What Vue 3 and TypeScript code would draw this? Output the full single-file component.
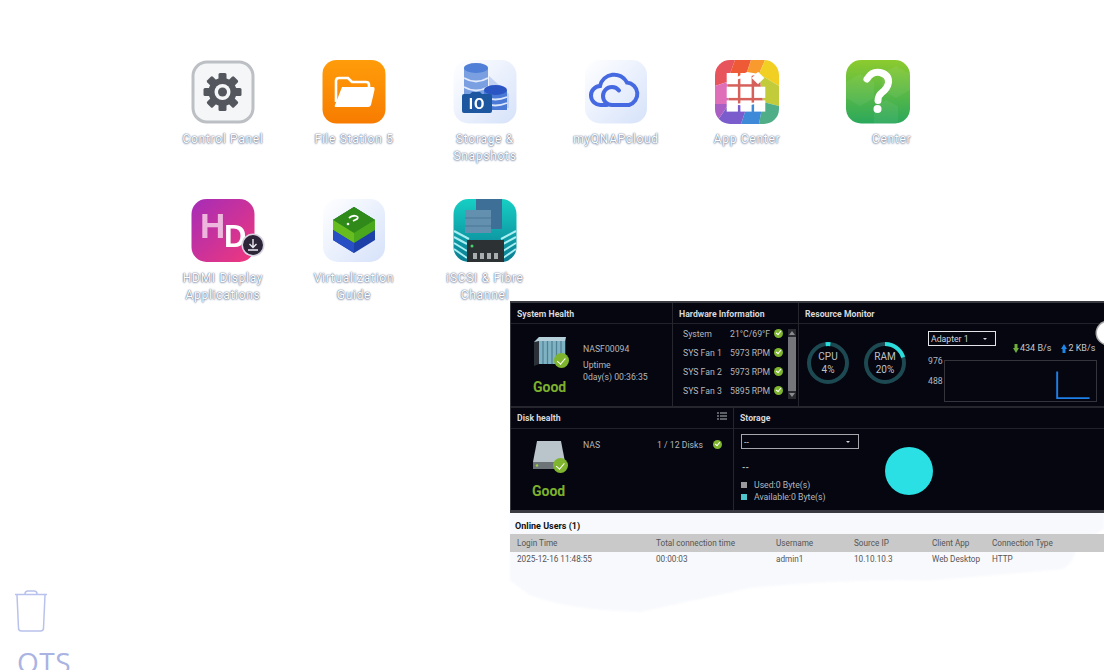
<script setup lang="ts">
interface AppItem {
  id: string
  label: string
  ghost?: string
}

const apps: AppItem[] = [
  { id: 'control', label: 'Control Panel' },
  { id: 'files', label: 'File Station 5' },
  { id: 'storage', label: 'Storage & Snapshots' },
  { id: 'cloud', label: 'myQNAPcloud' },
  { id: 'appcenter', label: 'App Center' },
  { id: 'help', label: 'Center', ghost: 'Help' },
  { id: 'hd', label: 'HDMI Display Applications' },
  { id: 'virt', label: 'Virtualization Guide' },
  { id: 'iscsi', label: 'iSCSI & Fibre Channel' },
]

const sensors = [
  { name: 'System', value: '21°C/69°F' },
  { name: 'SYS Fan 1', value: '5973 RPM' },
  { name: 'SYS Fan 2', value: '5973 RPM' },
  { name: 'SYS Fan 3', value: '5895 RPM' },
]

const users = [
  { login: '2025-12-16 11:48:55', total: '00:00:03', user: 'admin1', ip: '10.10.10.3', app: 'Web Desktop', type: 'HTTP' },
]

const tiles = [
  [0, 0], [1, 0], [0, 1], [1, 1], [2, 1], [0, 2], [1, 2], [2, 2],
]

// stroke-dasharray for a gauge ring of radius 19
const ring = (pct: number) => {
  const c = 2 * Math.PI * 19
  return `${(c * pct) / 100} ${c}`
}
</script>

<template>
  <div class="desktop">
    <div class="icons">
      <div v-for="app in apps" :key="app.id" class="app">
        <svg class="app-icon" viewBox="0 0 64 64" width="64" height="64">
          <defs>
            <linearGradient id="g-orange" x1="0" y1="0" x2="0" y2="1">
              <stop offset="0" stop-color="#ff9c0a" />
              <stop offset="1" stop-color="#f77c00" />
            </linearGradient>
            <linearGradient id="g-pale" x1="0" y1="0" x2="1" y2="1">
              <stop offset="0" stop-color="#ffffff" />
              <stop offset="1" stop-color="#d6e2fa" />
            </linearGradient>
            <linearGradient id="g-green" x1="0" y1="0" x2="0" y2="1">
              <stop offset="0" stop-color="#8ccb2e" />
              <stop offset="1" stop-color="#2aa85c" />
            </linearGradient>
            <linearGradient id="g-hd" x1="0" y1="0" x2="1" y2="1">
              <stop offset="0" stop-color="#a52cb8" />
              <stop offset="1" stop-color="#f0387c" />
            </linearGradient>
            <linearGradient id="g-teal" x1="0" y1="0" x2="0" y2="1">
              <stop offset="0" stop-color="#16cfc4" />
              <stop offset="1" stop-color="#0a7c92" />
            </linearGradient>
          </defs>

          <template v-if="app.id === 'control'">
            <rect x="2" y="2" width="60" height="60" rx="14" fill="#f5f6f8" stroke="#bcbfc3" stroke-width="3" />
            <g transform="translate(31.500 32)" fill="#54585e">
              <rect v-for="a in [0, 45, 90, 135, 180, 225, 270, 315]" :key="a" x="-4" y="-19" width="8" height="9" rx="1.500" :transform="`rotate(${a})`" />
              <circle r="14" />
              <circle r="8" fill="#f5f6f8" />
              <circle r="4.500" />
            </g>
          </template>

          <template v-else-if="app.id === 'files'">
            <rect x="0.500" y="0" width="63" height="63.500" rx="14" fill="url(#g-orange)" />
            <path d="M14 42V21q0-3 3-3h9l4 4h14q3 0 3 3v2" fill="none" stroke="#fff" stroke-width="2.600" />
            <path d="M20 27h31q2 0 1.600 2.400L49 45q-.6 2-3 2H14q-2 0-1-2z" fill="#fff" />
          </template>

          <template v-else-if="app.id === 'storage'">
            <rect x="0.500" y="0" width="63" height="63.500" rx="15" fill="url(#g-pale)" />
            <path d="M36 16l20 18v14H36z" fill="#c3d2f2" />
            <rect x="11" y="8" width="24" height="34" fill="#7aa0e2" />
            <ellipse cx="23" cy="8" rx="12" ry="5" fill="#4f7fd6" />
            <path d="M11 18q12 7 24 0M11 27q12 7 24 0" fill="none" stroke="#e0e9fa" stroke-width="2" />
            <rect x="31" y="30" width="23" height="20" fill="#4a7ad6" />
            <ellipse cx="42.500" cy="30" rx="11.500" ry="5" fill="#2c55c4" />
            <path d="M31 37q11 5 23 0M31 43q11 5 23 0" fill="none" stroke="#dbe6fb" stroke-width="1.800" />
            <path d="M9 36q0-2 2-2h6l2-2h8l2 2h8q2 0 2 2v15q0 2-2 2H11q-2 0-2-2z" fill="#1c57a0" />
            <text x="24" y="49" text-anchor="middle" class="io">IO</text>
          </template>

          <template v-else-if="app.id === 'cloud'">
            <rect x="1" y="0" width="62" height="63.500" rx="15" fill="url(#g-pale)" />
            <path d="M23 45h-6a9.500 9.500 0 0 1-1-19 14.500 14.500 0 0 1 27-3.500 11.500 11.500 0 0 1 2 22.500H28a9 9 0 0 1 0-18c3 0 5.500 1.500 7 3.500" fill="none" stroke="#4469e0" stroke-width="4" stroke-linecap="round" />
          </template>

          <template v-else-if="app.id === 'appcenter'">
            <clipPath id="clip-app"><rect x="0" y="0" width="64" height="64" rx="15" /></clipPath>
            <g clip-path="url(#clip-app)">
              <polygon points="0,0 20,0 12,22 0,26" fill="#e8545c" />
              <polygon points="20,0 36,0 32,12 12,22" fill="#ee5a36" />
              <polygon points="36,0 50,0 44,14 32,12" fill="#f89a2e" />
              <polygon points="50,0 64,0 64,26 44,14" fill="#f2cf23" />
              <polygon points="64,26 64,46 48,42 44,14" fill="#c2cc3a" />
              <polygon points="64,46 64,64 44,64 48,42" fill="#4fae88" />
              <polygon points="44,64 26,64 32,46 48,42" fill="#3e8ad8" />
              <polygon points="26,64 0,64 14,44 32,46" fill="#7a5ccc" />
              <polygon points="0,64 0,44 14,44" fill="#a85ec2" />
              <polygon points="0,26 12,22 14,44 0,44" fill="#de6fb8" />
              <polygon points="12,22 44,14 48,42 14,44" fill="#d6605a" />
            </g>
            <rect v-for="t in tiles" :key="t.join()" :x="11.700 + t[0] * 13.700" :y="13 + t[1] * 13.700" width="11.200" height="11.200" fill="#fff" />
            <rect x="38.500" y="13.500" width="9" height="9" fill="#fff" transform="rotate(45 43 18)" />
          </template>

          <template v-else-if="app.id === 'help'">
            <rect x="0" y="0" width="64" height="63.500" rx="15" fill="url(#g-green)" />
            <path d="M0 22l14-8 14 8v16l-14 8-14-8zM36 14l14-8 14 8v16l-14 8-14-8zM28 46l12-6 12 6v18H28z" fill="#fff" opacity="0.060" />
            <path d="M21 19q5-8 13-6.500 9 2 8.500 10-1 6-6.500 10-4 3-4 8" fill="none" stroke="#fff" stroke-width="7" stroke-linecap="round" />
            <circle cx="31.500" cy="49" r="4" fill="#fff" />
          </template>

          <template v-else-if="app.id === 'hd'">
            <rect x="0.500" y="0" width="63" height="63" rx="15" fill="url(#g-hd)" />
            <text x="9" y="39" class="hd hd-h">H</text>
            <text x="33" y="48" class="hd">D</text>
          </template>

          <template v-else-if="app.id === 'virt'">
            <rect x="1" y="0" width="62" height="63" rx="15" fill="url(#g-pale)" />
            <polygon points="32,8 53,21 53,41 32,54 11,41 11,21" fill="#1c3fa8" />
            <polygon points="11,28 32,41 53,28 53,21 32,8 11,21" fill="#3a9a1e" />
            <polygon points="11,21 32,34 53,21 32,8" fill="#2f8a1a" />
            <polygon points="11,21 32,34 32,44 11,31" fill="#67bd1e" />
            <polygon points="32,34 53,21 53,31 32,44" fill="#4aa81c" />
            <polygon points="11,31 32,44 32,54 11,41" fill="#2850c4" />
            <path d="M27 19q3-3 7-2 3 1 1 3l-4 2" fill="none" stroke="#fff" stroke-width="1.800" />
            <circle cx="26" cy="25" r="1.300" fill="#fff" />
          </template>

          <template v-else>
            <rect x="0.500" y="0" width="63" height="63" rx="15" fill="url(#g-teal)" />
            <rect x="23" y="0" width="26" height="30" fill="#3d6f97" />
            <rect x="12" y="11" width="26" height="23" fill="#6390ae" />
            <path d="M12 19h26M12 27h26" stroke="#4a7797" />
            <path d="M1 32l15 8M1 38l13 7M1 44l13 8M1 50l13 9M63 32l-15 8M63 38l-13 7M63 44l-13 8M63 50l-13 9" stroke="#a9eef2" stroke-width="2" />
            <rect x="14" y="41" width="37" height="22" fill="#2c3134" />
            <rect x="20" y="54" width="4" height="6" fill="#a8adb0" />
            <rect x="27" y="54" width="4" height="6" fill="#a8adb0" />
            <rect x="34" y="54" width="4" height="6" fill="#a8adb0" />
            <rect x="41" y="54" width="4" height="6" fill="#a8adb0" />
            <circle cx="19" cy="47" r="1.500" fill="#46d46a" />
          </template>
        </svg>

        <span v-if="app.id === 'hd'" class="badge">
          <svg viewBox="0 0 20 20" width="20" height="20">
            <path d="M10 4v8M6.500 9l3.500 3.500L13.500 9M5 15h10" fill="none" stroke="#e8e8ee" stroke-width="1.400" />
          </svg>
        </span>
        <span class="app-label"><span v-if="app.ghost" class="ghost">{{ app.ghost }} </span>{{ app.label }}</span>
      </div>
    </div>

    <div class="trash">
      <svg viewBox="0 0 34 44" width="34" height="44">
        <path d="M11 5q0-3 3-3h6q3 0 3 3M1 5.500h32M3 6l1.500 33q0 3 3 3h19q3 0 3-3L31 6" fill="none" stroke="#b9c2ec" stroke-width="1.500" />
      </svg>
      <span class="qts">QTS</span>
    </div>

    <svg class="smear" viewBox="0 0 594 110" width="594" height="102" preserveAspectRatio="none">
      <path d="M0 0H594V20L566 40Q564 58 552 64L420 76Q330 74 240 84L130 110Q60 108 20 92L0 76Z" fill="#f8f9fd" />
    </svg>

    <section class="monitor">
      <div class="dash">
        <div class="row-top">
          <div class="cell">
            <h3>System Health</h3>
            <div class="cell-body health">
              <div class="status">
                <div class="device">
                  <svg viewBox="0 0 36 32" width="36" height="32">
                    <polygon points="1,6 6,1 33,1 33,28 6,28 1,30" fill="#2b3138" />
                    <rect x="6" y="5" width="26" height="23" fill="#7fb2c2" />
                    <path d="M10 5v23M14.500 5v23M19 5v23M23.500 5v23M28 5v23" stroke="#4e7f92" stroke-width="1.200" />
                    <polygon points="1,6 6,1 33,1 32,5 6,5" fill="#b5d0da" />
                  </svg>
                  <i class="check big" />
                </div>
                <strong>Good</strong>
              </div>
              <div class="host">
                <span class="host-name">NASF00094</span>
                <span>Uptime</span>
                <span>0day(s) 00:36:35</span>
              </div>
            </div>
          </div>

          <div class="cell">
            <h3>Hardware Information</h3>
            <div class="cell-body hardware">
              <ul class="sensors">
                <li v-for="s in sensors" :key="s.name">
                  <span class="sensor-name">{{ s.name }}</span>
                  <span class="sensor-value">{{ s.value }}</span>
                  <i class="check" />
                </li>
              </ul>
              <div class="scrollbar">
                <span class="arrow up" />
                <span class="thumb" />
                <span class="arrow down" />
              </div>
            </div>
          </div>

          <div class="cell">
            <h3>Resource Monitor</h3>
            <div class="cell-body resource">
              <div class="gauge" v-for="g in [{ n: 'CPU', p: 4, o: -7 }, { n: 'RAM', p: 20, o: 0 }]" :key="g.n">
                <svg viewBox="0 0 46 46" width="46" height="46">
                  <circle cx="23" cy="23" r="19" fill="none" stroke="#1d4a52" stroke-width="4" />
                  <circle cx="23" cy="23" r="19" fill="none" stroke="#2bdcdc" stroke-width="4" :stroke-dasharray="ring(g.p)" :transform="`rotate(${-90 + g.o} 23 23)`" />
                </svg>
                <span class="gauge-text">{{ g.n }}<br />{{ g.p }}%</span>
              </div>
              <div class="network">
                <div class="net-top">
                  <div class="select adapter">Adapter 1<span class="caret" /></div>
                  <div class="speeds">
                    <svg viewBox="0 0 6 9" width="6" height="9"><path d="M1.500 0h3v4H6L3 9 0 4h1.500z" fill="#6fae3a" /></svg>434 B/s
                    <svg class="up-arrow" viewBox="0 0 6 9" width="6" height="9"><path d="M1.500 9h3V5H6L3 0 0 5h1.500z" fill="#1f86e8" /></svg>2 KB/s
                  </div>
                </div>
                <div class="chart">
                  <div class="axis"><span>976</span><span>488</span></div>
                  <svg class="plot" viewBox="0 0 153 42" width="153" height="42">
                    <path d="M115 11V39H149" fill="none" stroke="#1f7fe8" stroke-width="2" />
                  </svg>
                </div>
              </div>
            </div>
          </div>
        </div>

        <div class="row-bottom">
          <div class="cell">
            <h3 class="with-tool">
              Disk health
              <svg viewBox="0 0 10 8" width="10" height="8">
                <path d="M3 1h7M3 4h7M3 7h7M0 1h2M0 4h2M0 7h2" stroke="#b8bac0" />
              </svg>
            </h3>
            <div class="cell-body disk">
              <div class="status">
                <div class="device">
                  <svg viewBox="0 0 36 30" width="36" height="30">
                    <polygon points="5,0 29,0 33,21 1,21" fill="#b9c5cb" />
                    <rect x="1" y="21" width="32" height="7" fill="#6d7478" />
                    <circle cx="5" cy="24.500" r="1.200" fill="#9ed04a" />
                  </svg>
                  <i class="check big" />
                </div>
                <strong>Good</strong>
              </div>
              <div class="disk-row">
                <span class="disk-name">NAS</span>
                <span class="disk-count">1 / 12 Disks</span>
                <i class="check" />
              </div>
            </div>
          </div>

          <div class="cell">
            <h3>Storage</h3>
            <div class="cell-body storage">
              <div class="volume">
                <div class="select pool">--<span class="caret" /></div>
                <div class="dashes">--</div>
                <div class="legend"><i class="used" />Used:0 Byte(s)</div>
                <div class="legend"><i class="avail" />Available:0 Byte(s)</div>
              </div>
              <div class="pie" />
            </div>
          </div>
        </div>
      </div>

      <div class="online">
        <h4>Online Users ({{ users.length }})</h4>
        <div class="tr th">
          <span>Login Time</span>
          <span>Total connection time</span>
          <span>Username</span>
          <span>Source IP</span>
          <span>Client App</span>
          <span>Connection Type</span>
        </div>
        <div v-for="u in users" :key="u.login" class="tr">
          <span>{{ u.login }}</span>
          <span>{{ u.total }}</span>
          <span>{{ u.user }}</span>
          <span>{{ u.ip }}</span>
          <span>{{ u.app }}</span>
          <span>{{ u.type }}</span>
        </div>
      </div>

      <span class="close" />
    </section>
  </div>
</template>

<style>
html,
body {
  margin: 0;
  background: #fff;
  overflow: hidden;
}
</style>

<style scoped>
.desktop {
  position: relative;
  width: 1104px;
  height: 670px;
  overflow: hidden;
  background: #fff;
  font-family: Roboto, "Liberation Sans", sans-serif;
}

.icons {
  position: absolute;
  left: 157.500px;
  top: 60px;
  display: grid;
  grid-template-columns: repeat(6, 131px);
  grid-auto-rows: 139px;
}

.app {
  position: relative;
  display: flex;
  flex-direction: column;
  align-items: center;
}

.app-icon {
  display: block;
  filter: blur(0.4px);
}

.app-label {
  width: 104px;
  margin-top: 7px;
  text-align: center;
  font-size: 12px;
  line-height: 17px;
  letter-spacing: 0.7px;
  color: #fff;
  text-shadow: 0 0 1px #5d6b86, 0 0 2px #7c8aa8, 0 1px 2px #aab4c8;
}

.ghost {
  visibility: hidden;
}

.io {
  font: 700 15px Roboto, sans-serif;
  fill: #fff;
  letter-spacing: 1px;
}

.hd {
  font: 700 31px "Liberation Sans", sans-serif;
  fill: #fff;
}

.hd-h {
  font-size: 35px;
  fill: #edb6dd;
}

.badge {
  position: absolute;
  left: 85px;
  top: 36px;
  width: 20px;
  height: 20px;
  border-radius: 50%;
  background: #2c2538;
  box-shadow: 0 0 0 1.500px #d8d4e2;
  display: flex;
}

.trash {
  position: absolute;
  left: 14px;
  top: 589px;
}

.trash svg {
  display: block;
}

.qts {
  display: block;
  margin: 15px 0 0 3px;
  font-family: "Open Sans", sans-serif;
  font-size: 28px;
  font-weight: 500;
  line-height: 28px;
  letter-spacing: 0.5px;
  color: #aab3e2;
}

.smear {
  position: absolute;
  left: 510px;
  top: 510px;
  filter: blur(1px);
}

.monitor {
  position: absolute;
  left: 510px;
  top: 301px;
  width: 594px;
}

.dash {
  background: #05060f;
  border: 1px solid #3a3b42;
  border-right: 0;
  border-top-width: 2px;
  border-bottom-width: 3px;
  color: #b4b7bd;
  font-size: 8.700px;
}

.row-top,
.row-bottom {
  display: grid;
  height: 103px;
}

.row-top {
  grid-template-columns: 161px 126px 1fr;
  border-bottom: 2px solid #26272e;
}

.row-bottom {
  grid-template-columns: 222px 1fr;
  height: 102px;
}

.cell {
  display: flex;
  flex-direction: column;
  min-width: 0;
}

.cell + .cell {
  border-left: 1px solid #26272e;
}

h3 {
  box-sizing: border-box;
  margin: 0;
  height: 21px;
  flex: none;
  padding: 1px 6px 0;
  display: flex;
  align-items: center;
  font-size: 8.700px;
  font-weight: 700;
  color: #d6d8dc;
  border-bottom: 1px solid #22232a;
}

.row-bottom h3 {
  padding-top: 0;
}

.with-tool {
  justify-content: space-between;
  padding-right: 6px;
}

.with-tool svg {
  margin-top: -5px;
}

.cell-body {
  flex: 1;
  display: flex;
  min-height: 0;
}

.health {
  padding: 12px 0 0 22px;
}

.status {
  width: 40px;
  display: flex;
  flex-direction: column;
  align-items: flex-start;
}

.device {
  position: relative;
  height: 38px;
}

.device svg {
  display: block;
}

strong {
  display: block;
  margin-top: 5px;
  font-size: 14px;
  font-weight: 700;
  line-height: 16px;
  color: #7cb02d;
}

.check {
  display: inline-block;
  position: relative;
  width: 9px;
  height: 9px;
  border-radius: 50%;
  background: #7fb52e;
  flex: none;
}

.check::after {
  content: "";
  position: absolute;
  left: 2.800px;
  top: 1.300px;
  width: 2.200px;
  height: 4px;
  border: solid #fff;
  border-width: 0 1.100px 1.100px 0;
  transform: rotate(40deg);
}

.check.big {
  position: absolute;
  left: 21px;
  top: 17px;
  width: 15px;
  height: 15px;
}

.check.big::after {
  left: 5px;
  top: 2.500px;
  width: 3.500px;
  height: 6.500px;
  border-width: 0 1.600px 1.600px 0;
}

.host {
  display: flex;
  flex-direction: column;
  margin-left: 10px;
  padding-top: 7px;
  line-height: 12px;
}

.host-name {
  margin-bottom: 4px;
}

.hardware {
  padding: 0 2px 0 10px;
  justify-content: space-between;
}

.sensors {
  list-style: none;
  margin: 0;
  padding: 0;
  width: 100px;
}

.sensors li {
  display: flex;
  align-items: center;
  height: 19px;
}

.sensor-name {
  width: 47px;
}

.sensor-value {
  width: 44px;
}

.scrollbar {
  width: 8px;
  height: 70px;
  margin-top: 5px;
  background: #2a2b30;
  display: flex;
  flex-direction: column;
  align-items: center;
}

.arrow {
  width: 0;
  height: 0;
  margin: 2px 0;
  border: 3px solid transparent;
}

.arrow.up {
  border-top: 0;
  border-bottom: 4px solid #8a8b90;
}

.arrow.down {
  border-bottom: 0;
  border-top: 4px solid #8a8b90;
}

.thumb {
  flex: 1;
  width: 8px;
  background: #74757a;
}

.resource {
  padding: 16px 0 0 6px;
  gap: 11px;
}

.gauge {
  position: relative;
  width: 46px;
  height: 46px;
  flex: none;
}

.gauge svg {
  display: block;
}

.gauge-text {
  position: absolute;
  inset: 0;
  display: flex;
  align-items: center;
  justify-content: center;
  text-align: center;
  font-size: 10px;
  line-height: 13px;
  color: #bfc1c6;
}

.network {
  margin: -9px 0 0 9px;
  width: 170px;
  flex: none;
}

.net-top {
  display: flex;
  height: 29px;
}

.select {
  display: flex;
  align-items: center;
  justify-content: space-between;
  box-sizing: border-box;
  height: 15px;
  padding: 0 8px 0 2px;
  border: 1px solid #e4e5e8;
  color: #d2d4d8;
}

.adapter {
  width: 68px;
}

.caret {
  width: 0;
  height: 0;
  border: 2px solid transparent;
  border-top: 2.500px solid #d2d4d8;
  border-bottom: 0;
}

.speeds {
  margin: 11px 0 0 17px;
  display: flex;
  align-items: center;
  height: 12px;
  white-space: nowrap;
  font-size: 9px;
  color: #c6c8cc;
}

.speeds svg {
  margin-right: 1px;
}

.up-arrow {
  margin-left: 10px;
}

.chart {
  display: flex;
  gap: 2px;
}

.axis {
  width: 14px;
  display: flex;
  flex-direction: column;
  gap: 9px;
  line-height: 11px;
  margin-top: -4px;
}

.plot {
  display: block;
  flex: none;
  box-sizing: border-box;
  border: 1px solid #34353c;
}

.disk {
  padding: 12px 0 0 21px;
}

.disk .status {
  width: 41px;
}

.disk .status strong {
  margin-top: 4px;
}

.disk-row {
  display: flex;
  align-items: center;
  height: 9px;
  margin: -1px 0 0 10px;
}

.disk-name {
  width: 74px;
}

.disk-count {
  width: 56px;
}

.storage {
  padding: 5px 0 0 7px;
}

.volume {
  width: 118px;
}

.pool {
  height: 15px;
  border-color: #a5a7ac;
}

.dashes {
  margin: 13px 0 7px 1px;
  line-height: 10px;
  font-weight: 700;
}

.legend {
  display: flex;
  align-items: center;
  height: 12px;
}

.legend i {
  width: 6px;
  height: 6px;
  margin-right: 7px;
}

.used {
  background: #9a9a9e;
}

.avail {
  background: #4fc4cc;
}

.pie {
  width: 48px;
  height: 48px;
  margin: 13px 0 0 26px;
  border-radius: 50%;
  background: #2ae0e4;
}

.online {
  position: relative;
  padding-top: 8px;
  font-size: 8.200px;
  color: #555;
}

h4 {
  margin: 0 0 2px 5px;
  height: 11px;
  font-size: 9px;
  line-height: 11px;
  font-weight: 700;
  color: #111;
}

.tr {
  display: grid;
  grid-template-columns: 139px 120px 78px 78px 60px 1fr;
  padding-left: 7px;
  height: 13px;
  align-items: center;
}

.th {
  height: 18px;
  background: #c9c9c9;
  color: #555;
}

.close {
  position: absolute;
  left: 587px;
  top: 21px;
  width: 22px;
  height: 22px;
  border-radius: 50%;
  background: #fff;
  box-shadow: 0 0 0 1.500px #aaa;
}
</style>
